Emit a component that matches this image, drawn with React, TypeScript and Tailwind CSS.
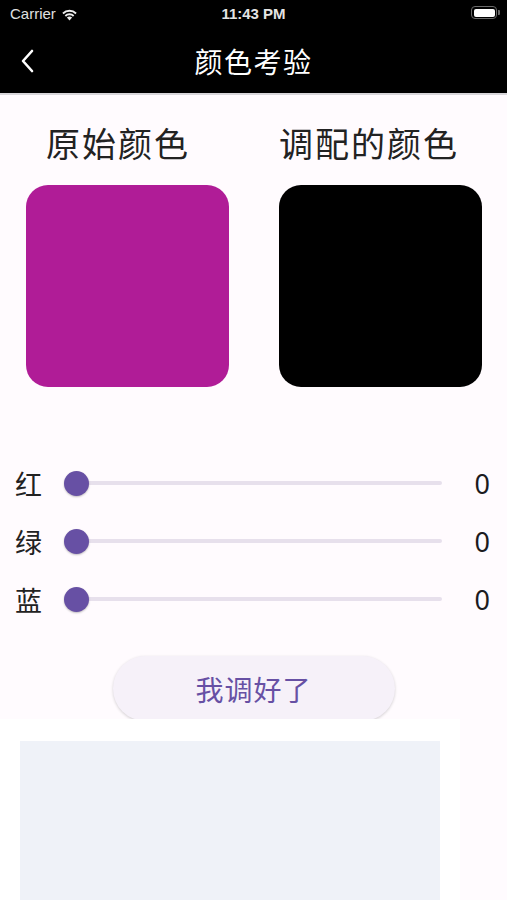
import React from "react"

const font = { fontFamily: '"Noto Sans CJK SC", "Noto Sans", sans-serif' }

function StatusBar() {
  return (
    <div className="relative h-[28px] text-white" style={{ fontFamily: '"Liberation Sans", "Noto Sans", sans-serif' }}>
      <div className="absolute left-[10px] top-[5px] flex items-center gap-[5px] text-[15px] leading-[18px] text-[#e0e0e0]">
        <span>Carrier</span>
        <svg width="17" height="13" viewBox="0 0 17 13">
          <path d="M8.5 12.5 L5.9 9.6 A3.8 3.8 0 0 1 11.1 9.6 Z" fill="#eee" />
          <path d="M3.7 7.3 A6.8 6.8 0 0 1 13.3 7.3 L12 8.7 A5 5 0 0 0 5 8.7 Z" fill="#eee" />
          <path d="M1.3 4.8 A10.2 10.2 0 0 1 15.7 4.8 L14.4 6.2 A8.3 8.3 0 0 0 2.6 6.2 Z" fill="#eee" />
        </svg>
      </div>
      <div className="absolute left-0 right-0 top-[5px] text-center text-[15px] font-bold leading-[18px] text-[#e4e4e4]">
        11:43 PM
      </div>
      <div className="absolute left-[471px] top-[6px] flex items-center">
        <div className="h-[13px] w-[26px] rounded-[4px] border-[1.5px] border-[#6a6a6a] p-[1.5px]">
          <div className="h-full w-full rounded-[2px] bg-white" />
        </div>
        <div className="ml-[1px] h-[5px] w-[2px] rounded-r-[1px] bg-[#6a6a6a]" />
      </div>
    </div>
  )
}

function SliderRow({ label }: { label: string }) {
  return (
    <div className="flex h-[58px] items-center">
      <span className="w-[47px] pl-[15px] text-[27px] leading-none text-[#222]">{label}</span>
      <div className="relative ml-[17px] flex h-[25px] w-[378px] items-center">
        <div className="h-[4px] w-full rounded-full bg-[#e7e0ec]" />
        <div className="absolute left-0 top-0 h-[25px] w-[25px] rounded-full bg-[#6750a4] shadow-[0_1px_2px_rgba(0,0,0,0.25)]" />
      </div>
      <span className="ml-auto pr-[17px] text-[27px] leading-none text-[#1c1b1f]" style={{ fontFamily: '"Noto Sans", sans-serif' }}>
        0
      </span>
    </div>
  )
}

export default function App() {
  return (
    <div className="flex h-[900px] w-[507px] flex-col overflow-hidden bg-[#fffbfe]" style={font}>
      <div className="bg-black">
        <StatusBar />
        <div className="relative flex h-[65px] items-center justify-center">
          <svg className="absolute left-[18px] top-[20px]" width="18" height="26" viewBox="0 0 18 26">
            <path d="M14 3 L5 13 L14 23" stroke="white" strokeWidth="2.6" fill="none" strokeLinecap="round" strokeLinejoin="round" />
          </svg>
          <span className="text-[28px] leading-none tracking-[1.5px] text-white">颜色考验</span>
        </div>
      </div>
      <div className="h-[2px] bg-[#d8d6da]" />

      <div className="flex pt-[28px]">
        <div className="flex w-[253px] flex-col items-start pl-[26px]">
          <span className="ml-[20px] text-[34px] leading-[40px] tracking-[2px] text-[#222]">原始颜色</span>
          <div className="mt-[22px] h-[202px] w-[203px] rounded-[22px] bg-[#b01c97]" />
        </div>
        <div className="flex w-[254px] flex-col items-start pl-[26px]">
          <span className="text-[34px] leading-[40px] tracking-[2px] text-[#222]">调配的颜色</span>
          <div className="mt-[22px] h-[202px] w-[203px] rounded-[22px] bg-black" />
        </div>
      </div>

      <div className="mt-[67px] flex flex-col">
        <SliderRow label="红" />
        <SliderRow label="绿" />
        <SliderRow label="蓝" />
      </div>

      <div className="mt-[28px] flex justify-center">
        <button className="h-[65px] w-[282px] rounded-full bg-[#f6f1f9] text-[28px] leading-none tracking-[1px] text-[#6750a4] shadow-[0_1px_3px_rgba(0,0,0,0.18)]">
          我调好了
        </button>
      </div>

      <div className="mt-[-2px] w-[460px] flex-1 bg-white pl-[20px] pt-[22px]">
        <div className="h-full w-[420px] bg-[#eff2f8]" />
      </div>
    </div>
  )
}
